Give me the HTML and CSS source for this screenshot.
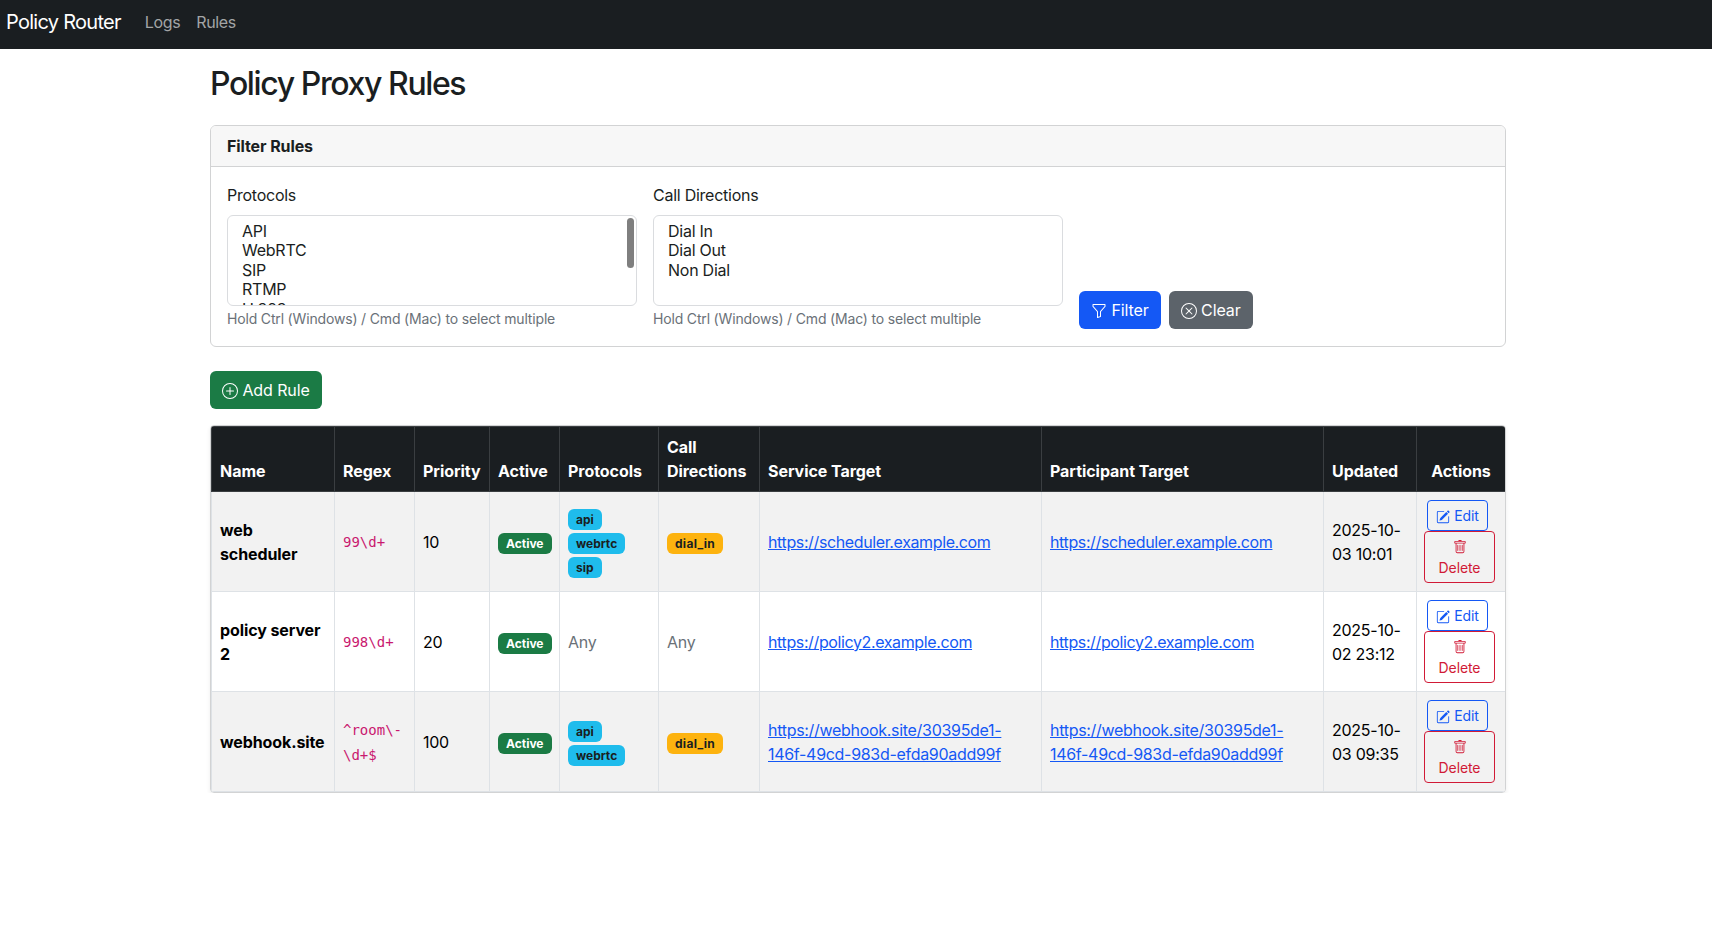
FILE: index.html
```html
<!DOCTYPE html>
<html lang="en">
<head>
    <meta charset="UTF-8">
    <meta name="viewport" content="width=device-width, initial-scale=1.0">
    <title>Policy Proxy Rules</title>
    <link rel="stylesheet" href="styles.css">
</head>
<body>
    <nav class="navbar">
        <a href="#" class="brand">Policy Router</a>
        <a href="#" class="nav-link">Logs</a>
        <a href="#" class="nav-link">Rules</a>
    </nav>

    <main class="container">
        <h1>Policy Proxy Rules</h1>

        <section class="card">
            <div class="card-header">Filter Rules</div>
            <form class="card-body">
                <div class="field">
                    <label>Protocols</label>
                    <div class="listbox">
                        <div>API</div>
                        <div>WebRTC</div>
                        <div>SIP</div>
                        <div>RTMP</div>
                        <div>H.323</div>
                        <span class="scroll-thumb"></span>
                    </div>
                    <small>Hold Ctrl (Windows) / Cmd (Mac) to select multiple</small>
                </div>
                <div class="field">
                    <label>Call Directions</label>
                    <div class="listbox">
                        <div>Dial In</div>
                        <div>Dial Out</div>
                        <div>Non Dial</div>
                    </div>
                    <small>Hold Ctrl (Windows) / Cmd (Mac) to select multiple</small>
                </div>
                <div class="field-actions">
                    <button type="button" class="btn btn-primary">
                        <svg class="icon" viewBox="0 0 16 16"><path d="M1.5 1.5A.5.5 0 0 1 2 1h12a.5.5 0 0 1 .5.5v2a.5.5 0 0 1-.128.334L10 8.692V13.5a.5.5 0 0 1-.342.474l-3 1A.5.5 0 0 1 6 14.5V8.692L1.628 3.834A.5.5 0 0 1 1.5 3.5zm1 .5v1.308l4.372 4.858A.5.5 0 0 1 7 8.5v5.306l2-.666V8.5a.5.5 0 0 1 .128-.334L13.5 3.308V2z"/></svg>
                        Filter
                    </button>
                    <button type="button" class="btn btn-secondary">
                        <svg class="icon" viewBox="0 0 16 16"><path d="M8 15A7 7 0 1 1 8 1a7 7 0 0 1 0 14m0 1A8 8 0 1 0 8 0a8 8 0 0 0 0 16"/><path d="M4.646 4.646a.5.5 0 0 1 .708 0L8 7.293l2.646-2.647a.5.5 0 0 1 .708.708L8.707 8l2.647 2.646a.5.5 0 0 1-.708.708L8 8.707l-2.646 2.647a.5.5 0 0 1-.708-.708L7.293 8 4.646 5.354a.5.5 0 0 1 0-.708"/></svg>
                        Clear
                    </button>
                </div>
            </form>
        </section>

        <button type="button" class="btn btn-success">
            <svg class="icon" viewBox="0 0 16 16"><path d="M8 15A7 7 0 1 1 8 1a7 7 0 0 1 0 14m0 1A8 8 0 1 0 8 0a8 8 0 0 0 0 16"/><path d="M8 4a.5.5 0 0 1 .5.5v3h3a.5.5 0 0 1 0 1h-3v3a.5.5 0 0 1-1 0v-3h-3a.5.5 0 0 1 0-1h3v-3A.5.5 0 0 1 8 4"/></svg>
            Add Rule
        </button>

        <div class="table-wrap">
            <table>
                <colgroup>
                    <col class="col-name">
                    <col class="col-regex">
                    <col class="col-priority">
                    <col class="col-active">
                    <col class="col-protocols">
                    <col class="col-directions">
                    <col class="col-target">
                    <col class="col-target">
                    <col class="col-updated">
                    <col class="col-actions">
                </colgroup>
                <thead>
                    <tr>
                        <th>Name</th>
                        <th>Regex</th>
                        <th>Priority</th>
                        <th>Active</th>
                        <th>Protocols</th>
                        <th>Call Directions</th>
                        <th>Service Target</th>
                        <th>Participant Target</th>
                        <th>Updated</th>
                        <th class="center">Actions</th>
                    </tr>
                </thead>
                <tbody>
                    <tr>
                        <td class="name">web scheduler</td>
                        <td><code>99\d+</code></td>
                        <td>10</td>
                        <td><span class="badge badge-success">Active</span></td>
                        <td>
                            <span class="badge badge-info">api</span>
                            <span class="badge badge-info">webrtc</span>
                            <span class="badge badge-info">sip</span>
                        </td>
                        <td><span class="badge badge-warning">dial_in</span></td>
                        <td><a href="#">https://scheduler.example.com</a></td>
                        <td><a href="#">https://scheduler.example.com</a></td>
                        <td>2025-10-03 10:01</td>
                        <td class="center actions">
                            <button type="button" class="btn-sm btn-edit"><svg class="icon" viewBox="0 0 16 16"><path d="M15.502 1.94a.5.5 0 0 1 0 .706L14.459 3.69l-2-2L13.502.646a.5.5 0 0 1 .707 0l1.293 1.293zm-1.75 2.456-2-2L4.939 9.21a.5.5 0 0 0-.121.196l-.805 2.414a.25.25 0 0 0 .316.316l2.414-.805a.5.5 0 0 0 .196-.12l6.813-6.814z"/><path d="M1 13.5A1.5 1.5 0 0 0 2.5 15h11a1.5 1.5 0 0 0 1.5-1.5v-6a.5.5 0 0 0-1 0v6a.5.5 0 0 1-.5.5h-11a.5.5 0 0 1-.5-.5v-11a.5.5 0 0 1 .5-.5H9a.5.5 0 0 0 0-1H2.5A1.5 1.5 0 0 0 1 2.5z"/></svg> Edit</button>
                            <button type="button" class="btn-sm btn-delete"><span class="icon-line"><svg class="icon" viewBox="0 0 16 16"><path d="M5.5 5.5A.5.5 0 0 1 6 6v6a.5.5 0 0 1-1 0V6a.5.5 0 0 1 .5-.5m2.5 0a.5.5 0 0 1 .5.5v6a.5.5 0 0 1-1 0V6a.5.5 0 0 1 .5-.5m3 .5a.5.5 0 0 0-1 0v6a.5.5 0 0 0 1 0z"/><path d="M14.5 3a1 1 0 0 1-1 1H13v9a2 2 0 0 1-2 2H5a2 2 0 0 1-2-2V4h-.5a1 1 0 0 1-1-1V2a1 1 0 0 1 1-1H6a1 1 0 0 1 1-1h2a1 1 0 0 1 1 1h3.5a1 1 0 0 1 1 1zM4.118 4 4 4.059V13a1 1 0 0 0 1 1h6a1 1 0 0 0 1-1V4.059L11.882 4zM2.5 3h11V2h-11z"/></svg></span>Delete</button>
                        </td>
                    </tr>
                    <tr>
                        <td class="name">policy server 2</td>
                        <td><code>998\d+</code></td>
                        <td>20</td>
                        <td><span class="badge badge-success">Active</span></td>
                        <td class="muted">Any</td>
                        <td class="muted">Any</td>
                        <td><a href="#">https://policy2.example.com</a></td>
                        <td><a href="#">https://policy2.example.com</a></td>
                        <td>2025-10-02 23:12</td>
                        <td class="center actions">
                            <button type="button" class="btn-sm btn-edit"><svg class="icon" viewBox="0 0 16 16"><path d="M15.502 1.94a.5.5 0 0 1 0 .706L14.459 3.69l-2-2L13.502.646a.5.5 0 0 1 .707 0l1.293 1.293zm-1.75 2.456-2-2L4.939 9.21a.5.5 0 0 0-.121.196l-.805 2.414a.25.25 0 0 0 .316.316l2.414-.805a.5.5 0 0 0 .196-.12l6.813-6.814z"/><path d="M1 13.5A1.5 1.5 0 0 0 2.5 15h11a1.5 1.5 0 0 0 1.5-1.5v-6a.5.5 0 0 0-1 0v6a.5.5 0 0 1-.5.5h-11a.5.5 0 0 1-.5-.5v-11a.5.5 0 0 1 .5-.5H9a.5.5 0 0 0 0-1H2.5A1.5 1.5 0 0 0 1 2.5z"/></svg> Edit</button>
                            <button type="button" class="btn-sm btn-delete"><span class="icon-line"><svg class="icon" viewBox="0 0 16 16"><path d="M5.5 5.5A.5.5 0 0 1 6 6v6a.5.5 0 0 1-1 0V6a.5.5 0 0 1 .5-.5m2.5 0a.5.5 0 0 1 .5.5v6a.5.5 0 0 1-1 0V6a.5.5 0 0 1 .5-.5m3 .5a.5.5 0 0 0-1 0v6a.5.5 0 0 0 1 0z"/><path d="M14.5 3a1 1 0 0 1-1 1H13v9a2 2 0 0 1-2 2H5a2 2 0 0 1-2-2V4h-.5a1 1 0 0 1-1-1V2a1 1 0 0 1 1-1H6a1 1 0 0 1 1-1h2a1 1 0 0 1 1 1h3.5a1 1 0 0 1 1 1zM4.118 4 4 4.059V13a1 1 0 0 0 1 1h6a1 1 0 0 0 1-1V4.059L11.882 4zM2.5 3h11V2h-11z"/></svg></span>Delete</button>
                        </td>
                    </tr>
                    <tr>
                        <td class="name">webhook.site</td>
                        <td><code>^room\-\d+$</code></td>
                        <td>100</td>
                        <td><span class="badge badge-success">Active</span></td>
                        <td>
                            <span class="badge badge-info">api</span>
                            <span class="badge badge-info">webrtc</span>
                        </td>
                        <td><span class="badge badge-warning">dial_in</span></td>
                        <td><a href="#" class="link-long">https://webhook.site/30395de1-146f-49cd-983d-efda90add99f</a></td>
                        <td><a href="#" class="link-long">https://webhook.site/30395de1-146f-49cd-983d-efda90add99f</a></td>
                        <td>2025-10-03 09:35</td>
                        <td class="center actions">
                            <button type="button" class="btn-sm btn-edit"><svg class="icon" viewBox="0 0 16 16"><path d="M15.502 1.94a.5.5 0 0 1 0 .706L14.459 3.69l-2-2L13.502.646a.5.5 0 0 1 .707 0l1.293 1.293zm-1.75 2.456-2-2L4.939 9.21a.5.5 0 0 0-.121.196l-.805 2.414a.25.25 0 0 0 .316.316l2.414-.805a.5.5 0 0 0 .196-.12l6.813-6.814z"/><path d="M1 13.5A1.5 1.5 0 0 0 2.5 15h11a1.5 1.5 0 0 0 1.5-1.5v-6a.5.5 0 0 0-1 0v6a.5.5 0 0 1-.5.5h-11a.5.5 0 0 1-.5-.5v-11a.5.5 0 0 1 .5-.5H9a.5.5 0 0 0 0-1H2.5A1.5 1.5 0 0 0 1 2.5z"/></svg> Edit</button>
                            <button type="button" class="btn-sm btn-delete"><span class="icon-line"><svg class="icon" viewBox="0 0 16 16"><path d="M5.5 5.5A.5.5 0 0 1 6 6v6a.5.5 0 0 1-1 0V6a.5.5 0 0 1 .5-.5m2.5 0a.5.5 0 0 1 .5.5v6a.5.5 0 0 1-1 0V6a.5.5 0 0 1 .5-.5m3 .5a.5.5 0 0 0-1 0v6a.5.5 0 0 0 1 0z"/><path d="M14.5 3a1 1 0 0 1-1 1H13v9a2 2 0 0 1-2 2H5a2 2 0 0 1-2-2V4h-.5a1 1 0 0 1-1-1V2a1 1 0 0 1 1-1H6a1 1 0 0 1 1-1h2a1 1 0 0 1 1 1h3.5a1 1 0 0 1 1 1zM4.118 4 4 4.059V13a1 1 0 0 0 1 1h6a1 1 0 0 0 1-1V4.059L11.882 4zM2.5 3h11V2h-11z"/></svg></span>Delete</button>
                        </td>
                    </tr>
                </tbody>
            </table>
        </div>
    </main>
</body>
</html>
```
FILE: styles.css
```css
body {
    margin: 0;
    font-family: "Inter", sans-serif;
    font-size: 16px;
    line-height: 24px;
    letter-spacing: -0.25px;
    color: #1a1e21;
    background-color: #fff;
}
a {
    color: #1458f5;
    letter-spacing: -0.38px;
}
a.link-long {
    letter-spacing: -0.3px;
}

/* Top bar */
.navbar {
    display: flex;
    align-items: center;
    height: 49px;
    padding: 0 6px 6px;
    box-sizing: border-box;
    background-color: #1a1e21;
}
.brand {
    margin-right: 16px;
    font-size: 20px;
    line-height: 30px;
    letter-spacing: -0.72px;
    color: #fff;
    text-decoration: none;
}
.nav-link {
    padding: 0 8px;
    color: #a3a5a6;
    text-decoration: none;
}

.container {
    width: 1296px;
    margin-left: 210px;
}
h1 {
    margin: 16px 0 22px;
    font-size: 32px;
    line-height: 38px;
    font-weight: 500;
    letter-spacing: -1.4px;
}

/* Filter card */
.card {
    border: 1px solid #d2d3d4;
    border-radius: 6px;
    margin-bottom: 24px;
}
.card-header {
    height: 41px;
    padding: 0 16px;
    box-sizing: border-box;
    line-height: 40px;
    font-weight: 700;
    letter-spacing: -0.1px;
    background-color: #f7f7f7;
    border-bottom: 1px solid #d2d3d4;
    border-radius: 5px 5px 0 0;
}
.card-body {
    display: grid;
    grid-template-columns: repeat(3, 1fr);
    column-gap: 16px;
    padding: 16px 16px 17px;
}
.field label {
    display: block;
    margin-bottom: 8px;
}
.field small {
    display: block;
    margin-top: 2px;
    font-size: 14px;
    line-height: 21px;
    letter-spacing: -0.17px;
    color: #6a7178;
}
.listbox {
    position: relative;
    height: 91px;
    padding: 6px 14px;
    box-sizing: border-box;
    overflow: hidden;
    line-height: 19.4px;
    border: 1px solid #dadcdf;
    border-radius: 6px;
}
.scroll-thumb {
    position: absolute;
    top: 2px;
    right: 2px;
    width: 7px;
    height: 50px;
    border-radius: 4px;
    background-color: #7f7f7f;
}
.field-actions {
    display: flex;
    align-items: flex-end;
    gap: 8px;
}

/* Buttons */
.btn {
    height: 38px;
    padding: 0 12px;
    font: inherit;
    letter-spacing: -0.1px;
    color: #fff;
    border: 0;
    border-radius: 6px;
}
.btn-primary { background-color: #1458f5; }
.btn-secondary { background-color: #5c636a; }
.btn-success { background-color: #1b7b45; }
.icon {
    width: 16px;
    height: 16px;
    fill: currentColor;
    vertical-align: -2.5px;
}

/* Rules table */
.table-wrap {
    margin-top: 16px;
    border: 1px solid #d2d3d4;
    border-radius: 4px;
    overflow: hidden;
    box-shadow: 0 2px 4px rgba(0, 0, 0, 0.075);
}
table {
    width: 100%;
    table-layout: fixed;
    border-collapse: collapse;
}
.col-name { width: 123px; }
.col-regex { width: 80px; }
.col-priority { width: 75px; }
.col-active { width: 70px; }
.col-protocols { width: 99px; }
.col-directions { width: 101px; }
.col-target { width: 282px; }
.col-updated { width: 93px; }
.col-actions { width: 89px; }
th, td {
    padding: 8px;
    text-align: left;
    border: 1px solid #dee2e6;
}
th {
    vertical-align: bottom;
    font-weight: 700;
    letter-spacing: -0.05px;
    color: #fff;
    background-color: #1a1e21;
    border-color: #3a3e41;
}
td {
    vertical-align: middle;
    color: #000;
}
tbody tr:nth-child(odd) td {
    background-color: #f2f2f2;
}
.center { text-align: center; }
td.actions { padding: 8px 10px 8px 7px; }
.name {
    font-weight: 700;
    letter-spacing: -0.1px;
}
td.muted { color: #6a7178; }
code {
    font-family: "DejaVu Sans Mono", monospace;
    font-size: 14px;
    letter-spacing: 0;
    color: #c9186f;
    word-break: break-word;
}
.badge {
    display: inline-block;
    padding: 4px 8px;
    font-size: 12px;
    line-height: 13px;
    font-weight: 700;
    letter-spacing: 0;
    border-radius: 6px;
}
.badge-success { color: #fff; background-color: #1b7b45; }
.badge-info { color: #1a1e21; background-color: #1fbcec; }
.badge-warning {
    letter-spacing: 0.3px;
    color: #1a1e21;
    background-color: #fdb30f;
}

.btn-sm {
    padding: 4px 8px;
    font: inherit;
    font-size: 14px;
    line-height: 21px;
    letter-spacing: -0.1px;
    background: none;
    border: 1px solid;
    border-radius: 4px;
}
.btn-sm .icon {
    width: 14px;
    height: 14px;
}
.btn-edit {
    width: 61px;
    margin-right: 4px;
    padding: 4px 0;
    color: #1458f5;
}
.btn-delete {
    width: 71px;
    color: #d11a36;
}
.icon-line {
    display: block;
    margin-top: -1px;
    margin-bottom: 1px;
}
```
